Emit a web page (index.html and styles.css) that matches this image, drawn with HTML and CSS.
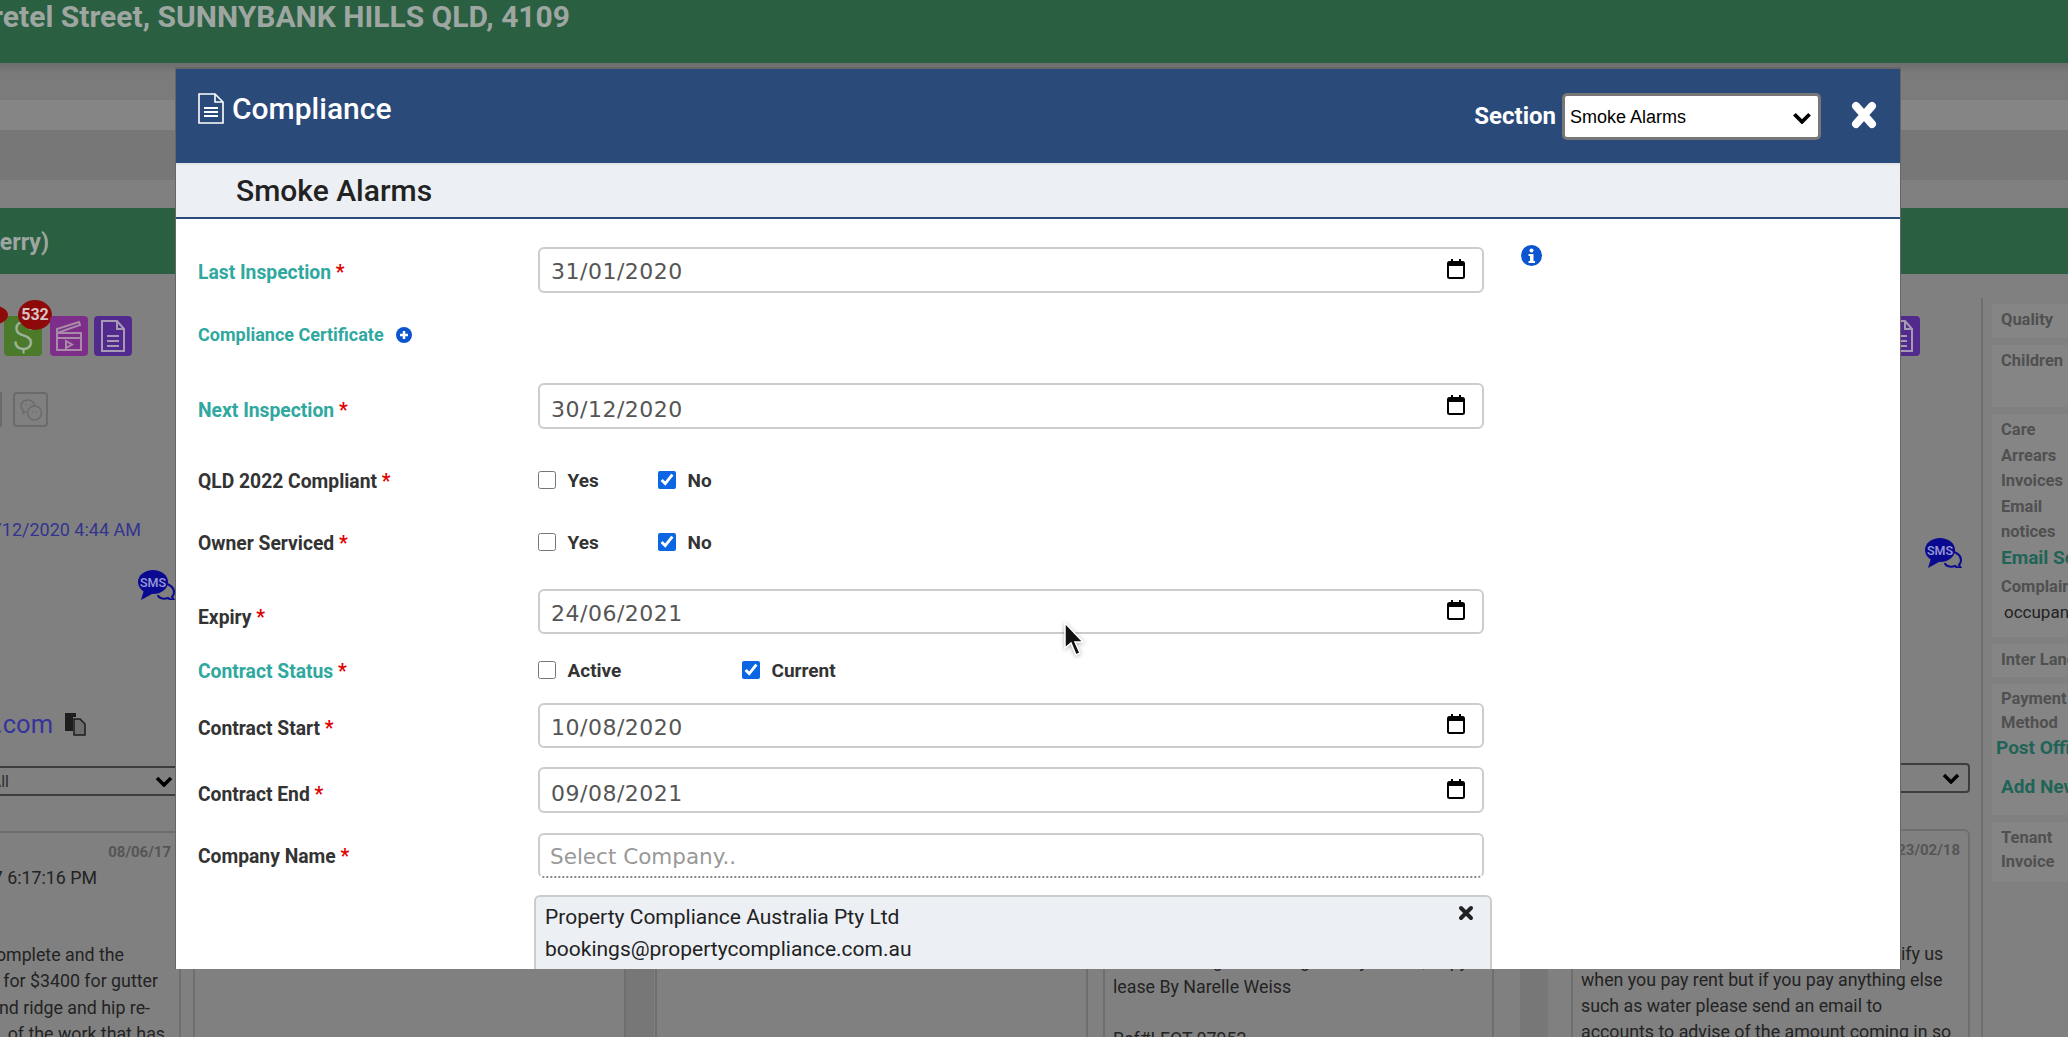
FILE: index.html
```html
<!DOCTYPE html>
<html lang="en">
<head>
    <meta charset="UTF-8">
    <title>Compliance</title>
    <link rel="stylesheet" href="styles.css">
</head>
<body>
<!--page behind the modal, already dimmed-->
<div class="page">
    <div class="topbar">
        <div class="clip-right address"><span>12 Bretel Street, SUNNYBANK HILLS QLD, 4109</span></div>
    </div>
    <div class="stripes">
        <div class="stripe-a"></div>
        <div class="stripe-b"></div>
        <div class="stripe-c"></div>
        <div class="stripe-d"></div>
    </div>
    <div class="tenantbar">
        <div class="clip-right tenant"><span>Tenant (Kerry)</span></div>
    </div>
    <div class="content">
        <div class="panel panel-1">
            <div class="tools">
                <div class="tiles">
                    <div class="tile tile-green">$<span class="badge">532</span><span class="badge badge-cut"></span></div>
                    <div class="tile tile-pink">
                        <svg width="28" height="32" viewBox="0 0 28 32" fill="none" stroke="#a98aa8" stroke-width="2"><path d="M2 13h24v17H2z"/><path d="M2 13l23-8-1-3L2 9z"/><path d="M2 18h24"/><path d="M11 21l6 3.500-6 3.500z"/></svg>
                    </div>
                    <div class="tile tile-violet">
                        <svg width="26" height="32" viewBox="0 0 26 32" fill="none" stroke="#a79ab5" stroke-width="2"><path d="M2 1h15l7 8v22H2z"/><path d="M17 1v8h7"/><path d="M7 16h12M7 21h12M7 26h12"/></svg>
                    </div>
                </div>
                <div class="chats">
                    <div class="chat-cut"></div>
                    <div class="chat-box">
                        <svg width="24" height="24" viewBox="0 0 24 24" fill="none" stroke="#6b6b6b" stroke-width="1.600"><path d="M9 2c-4 0-7 2.500-7 6 0 2 1 3.500 2.500 4.500L4 15l3-1.500"/><path d="M16 8.500C15 4.500 12 2 9 2"/><circle cx="15.500" cy="15" r="7"/><path d="M6.500 6.500h1M11 6.500h1M13 14h1M17 14h1"/></svg>
                    </div>
                </div>
                <div class="clip-right date-link"><span>Due 31/12/2020 4:44 AM</span></div>
                <div class="sms sms-left">
                    <svg width="37" height="30" viewBox="0 0 37 30"><use href="#sms-icon"/></svg>
                </div>
                <div class="mail-row">
                    <div class="clip-right mail"><span>accounts@tenant.com</span></div>
                    <svg class="copy" width="22" height="24" viewBox="0 0 22 24"><path d="M1 1h11v4H9v14H1z" fill="#1d1d1d"/><path d="M10 7h6l5 5v11H10z" fill="#6e6e6e" stroke="#1d1d1d" stroke-width="1.500"/></svg>
                </div>
                <div class="fake-select fake-select-left">
                    <span class="clip-right all"><span>All</span></span>
                    <svg width="18" height="12" viewBox="0 0 18 12"><use href="#chevron"/></svg>
                </div>
            </div>
            <div class="cards">
                <div class="card card-a">
                    <div class="card-date">08/06/17</div>
                    <div class="clip-right stamp"><span>08/06/2017 6:17:16 PM</span></div>
                    <div class="clip-right card-line line-1"><span>The work is complete and the</span></div>
                    <div class="clip-right card-line line-2"><span>was quoted for $3400 for gutter</span></div>
                    <div class="clip-right card-line line-3"><span>the gutters and ridge and hip re-</span></div>
                    <div class="clip-right card-line line-4"><span>of the work that has</span></div>
                </div>
                <div class="card card-b"></div>
            </div>
        </div>
        <div class="strip"></div>
        <div class="panel panel-2">
            <div class="tools"></div>
            <div class="cards">
                <div class="card card-c"></div>
                <div class="card card-d">
                    <p class="card-text">New lease signed and agreed by tenant, copy of<br>lease By Narelle Weiss<br><br>Ref#LFOT 07952</p>
                </div>
            </div>
        </div>
        <div class="strip"></div>
        <div class="panel panel-3">
            <div class="tools">
                <div class="tile tile-violet">
                    <svg width="26" height="32" viewBox="0 0 26 32" fill="none" stroke="#a79ab5" stroke-width="2"><path d="M2 1h15l7 8v22H2z"/><path d="M17 1v8h7"/><path d="M7 16h12M7 21h12M7 26h12"/></svg>
                </div>
                <div class="sms sms-right">
                    <svg width="37" height="30" viewBox="0 0 37 30"><use href="#sms-icon"/></svg>
                </div>
                <div class="fake-select fake-select-right">
                    <svg width="18" height="12" viewBox="0 0 18 12"><use href="#chevron"/></svg>
                </div>
            </div>
            <div class="cards">
                <div class="card card-e">
                    <div class="card-date">23/02/18</div>
                    <p class="card-text">Please remember you do not need to notify us<br>when you pay rent but if you pay anything else<br>such as water please send an email to<br>accounts to advise of the amount coming in so</p>
                </div>
            </div>
        </div>
        <div class="sidebar">
            <div class="side-box box-quality">Quality</div>
            <div class="side-box box-children">Children</div>
            <div class="side-box box-care">
                Care<br>Arrears<br>Invoices<br>Email<br>notices
                <div class="side-link">Email Service</div>
                <div class="side-sub">Complaint</div>
                <div class="side-plain">occupant</div>
            </div>
            <div class="side-box box-inter">Inter Language</div>
            <div class="side-box box-pay">
                Payment<br>Method
                <div class="side-link side-post">Post Office</div>
                <div class="side-link side-add">Add New</div>
            </div>
            <div class="side-box box-tenant">Tenant<br>Invoice</div>
        </div>
    </div>
</div>

<!--modal-->
<div class="modal">
    <div class="modal-head">
        <div class="modal-title">
            <svg width="26" height="31" viewBox="0 0 26 31" fill="none" stroke="#fff" stroke-width="1.600"><path d="M1 1h16l8 8v21H1z"/><path d="M17 1v8h8"/><path d="M6 15h14M6 19h14M6 23h14" stroke-width="2"/></svg>
            <span>Compliance</span>
        </div>
        <div class="modal-tools">
            <label class="section-label">Section</label>
            <div class="section-select">
                <select>
                    <option>Smoke Alarms</option>
                </select>
                <svg width="20" height="13" viewBox="0 0 18 12"><use href="#chevron"/></svg>
            </div>
            <svg class="close" width="26" height="28" viewBox="0 0 26 28"><path d="M5 5l16 18M21 5L5 23" stroke="#fff" stroke-width="8" stroke-linecap="round"/></svg>
        </div>
    </div>
    <div class="sub-head">Smoke Alarms</div>

    <div class="form">
        <div class="row row-input first">
            <div class="label teal">Last Inspection <i>*</i></div>
            <div class="date-field"><span>31/01/2020</span><svg width="18" height="20"><use href="#calendar"/></svg></div>
            <svg class="info" width="21" height="21" viewBox="0 0 21 21"><circle cx="10.500" cy="10.500" r="10.500" fill="#0b55d0"/><circle cx="10.500" cy="5.500" r="2" fill="#fff"/><path d="M7.500 9h5v7h1.500v2H7.500v-2H9v-5H7.500z" fill="#fff"/></svg>
        </div>
        <div class="row row-input cert">
            <div class="label teal small">Compliance Certificate
                <svg class="plus" width="16" height="16" viewBox="0 0 16 16"><circle cx="8" cy="8" r="8" fill="#0b55d0"/><path d="M8 4v8M4 8h8" stroke="#fff" stroke-width="2.500"/></svg>
            </div>
        </div>
        <div class="row row-input next">
            <div class="label label-drop teal">Next Inspection <i>*</i></div>
            <div class="date-field"><span>30/12/2020</span><svg width="18" height="20"><use href="#calendar"/></svg></div>
        </div>
        <div class="row row-check qld">
            <div class="label">QLD 2022 Compliant <i>*</i></div>
            <div class="checks">
                <label class="check"><input type="checkbox">Yes</label>
                <label class="check"><input type="checkbox" checked>No</label>
            </div>
        </div>
        <div class="row row-check owner">
            <div class="label">Owner Serviced <i>*</i></div>
            <div class="checks">
                <label class="check"><input type="checkbox">Yes</label>
                <label class="check"><input type="checkbox" checked>No</label>
            </div>
        </div>
        <div class="row row-input expiry">
            <div class="label label-low">Expiry <i>*</i></div>
            <div class="date-field"><span>24/06/2021</span><svg width="18" height="20"><use href="#calendar"/></svg></div>
        </div>
        <div class="row row-check status">
            <div class="label teal">Contract Status <i>*</i></div>
            <div class="checks">
                <label class="check check-wide"><input type="checkbox">Active</label>
                <label class="check"><input type="checkbox" checked>Current</label>
            </div>
        </div>
        <div class="row row-input start">
            <div class="label label-mid">Contract Start <i>*</i></div>
            <div class="date-field"><span>10/08/2020</span><svg width="18" height="20"><use href="#calendar"/></svg></div>
        </div>
        <div class="row row-input end">
            <div class="label label-drop">Contract End <i>*</i></div>
            <div class="date-field"><span>09/08/2021</span><svg width="18" height="20"><use href="#calendar"/></svg></div>
        </div>
        <div class="row row-input company">
            <div class="label label-up">Company Name <i>*</i></div>
            <div class="company-field">Select Company..</div>
        </div>
        <div class="picked">
            <svg class="picked-x" width="16" height="16" viewBox="0 0 16 16"><path d="M3 3l10 10M13 3L3 13" stroke="#222" stroke-width="4" stroke-linecap="round"/></svg>
            <div>Property Compliance Australia Pty Ltd</div>
            <div>bookings@propertycompliance.com.au</div>
        </div>
    </div>
</div>

<!--mouse pointer-->
<svg class="pointer" width="24" height="38" viewBox="0 0 24 38"><path d="M3 1v25l6-5 5 12 4-2-5-11h8z" fill="#111" stroke="#fff" stroke-width="1.500"/></svg>

<!--shared icons-->
<svg class="defs" width="0" height="0">
    <defs>
        <g id="calendar">
            <path d="M4 0h2v3H4zM12 0h2v3h-2z" fill="#000"/>
            <rect x="1" y="3" width="16" height="16" rx="1.500" fill="none" stroke="#000" stroke-width="2"/>
            <rect x="1" y="3" width="16" height="4" fill="#000"/>
        </g>
        <path id="chevron" d="M2 3l7 7 7-7" fill="none" stroke="#000" stroke-width="3.500"/>
        <g id="sms-icon">
            <path d="M24 14c8-1 12 4 12 8 0 3-2 5-2 5l2 3c-3 0-5-1-6-2-6 2-10-1-10-3" fill="none" stroke="#0a0a90" stroke-width="2"/>
            <ellipse cx="15" cy="12" rx="15" ry="12" fill="#0a0a90"/>
            <path d="M6 20l-3 10 11-6z" fill="#0a0a90"/>
            <text x="15" y="16.500" text-anchor="middle" class="sms-text">SMS</text>
        </g>
    </defs>
</svg>
</body>
</html>
```
FILE: styles.css
```css
*{
    margin: 0;
    padding: 0;
    box-sizing: border-box;
}
html,body{
    width: 2068px;
    height: 1037px;
    overflow: hidden;
}
body{
    position: relative;
    background: #808080;
    font-family: Roboto, "Liberation Sans", sans-serif;
}
.defs{
    position: absolute;
}

/* clipped on the left by the window edge */
.clip-right{
    display: flex;
    justify-content: flex-end;
    overflow: hidden;
    white-space: nowrap;
}

/*page behind*/
.page{
    height: 1037px;
    display: flex;
    flex-direction: column;
}
.topbar{
    height: 63px;
    flex: none;
    background: #2b5f41;
}
.address{
    width: 570px;
    font-size: 30px;
    line-height: 34px;
    font-weight: 700;
    color: #9ea6a1;
}
.stripes{
    height: 145px;
    flex: none;
}
.stripe-a{
    height: 37px;
    background: linear-gradient(#6d6d6d, #7b7b7b 10px);
}
.stripe-b{
    height: 30px;
    background: #858585;
}
.stripe-c{
    height: 50px;
    background: #777;
}
.stripe-d{
    height: 28px;
    background: #808080;
}
.tenantbar{
    height: 66px;
    flex: none;
    background: #2b5f41;
}
.tenant{
    width: 49px;
    font-size: 23px;
    line-height: 69px;
    font-weight: 700;
    color: #9ea6a1;
}
.content{
    flex: 1;
    display: flex;
    min-height: 0;
}
.panel{
    display: flex;
    flex-direction: column;
    flex: none;
}
.panel-1{
    width: 626px;
}
.panel-2{
    width: 866px;
}
.panel-3{
    width: 433px;
}
.strip{
    width: 28px;
    flex: none;
    background: #777;
}
.tools{
    height: 557px;
    flex: none;
}
.panel-3 .tools{
    height: 555px;
    display: flex;
    flex-direction: column;
    align-items: flex-end;
    padding: 42px 11px 0 0;
}

/*icon tiles*/
.tiles{
    width: 132px;
    height: 40px;
    margin-top: 42px;
    display: flex;
    justify-content: flex-end;
    gap: 6px;
}
.tile{
    width: 38px;
    height: 40px;
    border-radius: 4px;
    display: flex;
    align-items: center;
    justify-content: center;
    position: relative;
}
.tile-green{
    background: #4a7a2a;
    color: #9fb39a;
    font-size: 40px;
    font-weight: 300;
    margin-right: 2px;
}
.tile-pink{
    background: #7c2e88;
}
.tile-violet{
    background: #52298c;
}
.panel-3 .tile-violet{
    margin-right: 50px;
}
.badge{
    position: absolute;
    left: 14px;
    top: -16px;
    width: 34px;
    height: 30px;
    border-radius: 50%;
    background: #8e0a0a;
    color: #d8c4c4;
    font-size: 16px;
    line-height: 30px;
    font-weight: 700;
    text-align: center;
}
.badge-cut{
    left: -30px;
    top: -11px;
    width: 34px;
    height: 20px;
}
.chats{
    margin-top: 36px;
    height: 35px;
    display: flex;
    gap: 11px;
}
.chat-cut{
    width: 2px;
    border: 2px solid #6b6b6b;
    border-left: none;
    border-radius: 0 4px 4px 0;
}
.chat-box{
    width: 35px;
    height: 35px;
    border: 2px solid #6b6b6b;
    border-radius: 4px;
    display: flex;
    align-items: center;
    justify-content: center;
}
.date-link{
    width: 141px;
    margin-top: 91px;
    font-size: 18px;
    line-height: 24px;
    color: #34348e;
}
.sms{
    width: 37px;
    height: 30px;
}
.sms-left{
    margin: 28px 0 0 138px;
}
.sms-right{
    margin: 182px 8px 0 0;
}
.sms-text{
    font: 500 12.500px "Roboto", sans-serif;
    fill: #9a9ad8;
}
.mail-row{
    margin-top: 112px;
    height: 24px;
    display: flex;
    gap: 11px;
    align-items: center;
}
.mail{
    width: 53px;
    font-size: 25.500px;
    color: #34349a;
}
.fake-select{
    height: 30px;
    border-top: 2px solid #3d3d3d;
    border-bottom: 2px solid #3d3d3d;
    display: flex;
    align-items: center;
    justify-content: space-between;
}
.fake-select-left{
    width: 175px;
    margin-top: 30px;
    padding-right: 2px;
}
.fake-select-right{
    width: 300px;
    margin-top: 195px;
    border: 2px solid #3d3d3d;
    border-radius: 4px;
    padding-right: 8px;
    justify-content: flex-end;
}
.all{
    width: 9px;
    font-size: 16px;
    color: #2d2d2d;
}

/*cards under the modal*/
.cards{
    flex: 1;
    display: flex;
    min-height: 0;
}
.card{
    border: 2px solid #6e6e6e;
    border-radius: 6px;
    height: 400px;
    flex: none;
}
.card-text{
    font-size: 17.800px;
    line-height: 26px;
    color: #232323;
    white-space: nowrap;
}
.card-date{
    font-size: 15px;
    font-weight: 700;
    color: #555;
    text-align: right;
}
.card-a{
    width: 181px;
    border-left: none;
    border-radius: 0 6px 0 0;
    padding: 10px 8px 0 0;
}
.stamp{
    width: 97px;
    margin-top: 4px;
    font-size: 17.800px;
    line-height: 26px;
    color: #232323;
}
.card-line{
    font-size: 17.800px;
    line-height: 26.300px;
    color: #232323;
}
.line-1{
    width: 124px;
    margin-top: 51px;
}
.line-2{
    width: 158px;
}
.line-3{
    width: 150px;
}
.line-4{
    width: 165px;
}
.card-b{
    width: 433px;
    margin-left: 12px;
}
.card-c{
    width: 433px;
    margin-left: 1px;
}
.card-d{
    width: 391px;
    margin-left: 15px;
    padding: 115px 8px 0;
}
.card-e{
    width: 399px;
    margin-left: 23px;
    padding: 10px 8px 0;
}
.card-e .card-text{
    margin-top: 82px;
}

/*right sidebar*/
.sidebar{
    flex: 1;
    margin: 24px 0 0 0;
    padding-left: 9px;
    border-left: 2px solid #6e6e6e;
    min-width: 0;
    overflow: hidden;
    font-size: 16.500px;
    font-weight: 700;
    line-height: 25.500px;
    color: #505050;
    white-space: nowrap;
}
.side-box{
    width: 120px;
    background: #858585;
    padding: 3px 0 0 9px;
    margin-top: 7px;
}
.box-quality{
    height: 34px;
    margin-top: 6px;
}
.box-children{
    height: 62px;
}
.box-care{
    height: 223px;
}
.box-inter{
    height: 33px;
}
.box-pay{
    height: 131px;
    line-height: 24px;
}
.box-tenant{
    height: 60px;
    line-height: 24px;
    padding-top: 4px;
}
.side-link{
    color: #1f6457;
    font-size: 19px;
}
.side-post{
    margin: 1px 0 0 -5px;
}
.side-add{
    margin-top: 15px;
}
.side-sub{
    margin-top: 4px;
}
.side-plain{
    font-weight: 400;
    font-size: 17px;
    color: #222;
    padding-left: 3px;
}

/*modal*/
.modal{
    position: absolute;
    left: 175px;
    top: 67px;
    width: 1726px;
    height: 902px;
    background: #fff;
    border: 2px solid #666;
    border-width: 2px 1px 0 1px;
    overflow: hidden;
}
.modal-head{
    height: 94px;
    background: #2a4a7a;
    display: flex;
    justify-content: space-between;
    padding: 24px 23px 0 22px;
}
.modal-title{
    display: flex;
    gap: 8px;
    height: 32px;
    color: #fff;
    font-size: 30px;
    line-height: 32px;
    font-weight: 500;
}
.modal-tools{
    display: flex;
    align-items: flex-start;
}
.section-label{
    color: #fff;
    font-size: 24px;
    font-weight: 700;
    line-height: 47px;
    margin-right: 6px;
}
.section-select{
    position: relative;
    width: 259px;
    height: 47px;
    margin-right: 30px;
}
.section-select select{
    width: 100%;
    height: 100%;
    appearance: none;
    background: #fff;
    border: 3px solid #777;
    border-radius: 5px;
    padding-left: 5px;
    font: 18px "Liberation Sans", Arial, sans-serif;
    color: #000;
}
.section-select svg{
    position: absolute;
    right: 9px;
    top: 18px;
}
.close{
    margin-top: 8px;
}
.sub-head{
    height: 56px;
    background: #eceff4;
    border-top: 2px solid #e4e5e8;
    border-bottom: 2px solid #2a4a7a;
    padding-left: 60px;
    font-size: 30px;
    line-height: 52px;
    font-weight: 500;
    color: #222;
}

/*form rows*/
.form{
    padding: 0 0 0 22px;
}
.row{
    display: grid;
    grid-template-columns: 340px 946px auto;
    align-items: center;
    width: 1360px;
}
.row-input{
    height: 45px;
}
.row-check{
    height: 30px;
}
.first{
    height: 46px;
    margin-top: 28px;
}
.cert{
    margin-top: 18px;
}
.next{
    height: 46px;
    margin-top: 27px;
}
.qld{
    margin-top: 36px;
}
.owner{
    margin-top: 32px;
}
.expiry{
    margin-top: 32px;
}
.status{
    margin-top: 21px;
}
.start{
    margin-top: 18px;
}
.end{
    height: 46px;
    margin-top: 19px;
}
.company{
    margin-top: 20px;
}
.label{
    font-size: 19.300px;
    font-weight: 700;
    color: #333;
    padding-top: 4px;
}
.label i{
    color: #e00000;
    font-style: normal;
}
.teal{
    color: #2fa8a0;
}
.small{
    font-size: 18px;
    padding-top: 2px;
    display: flex;
    align-items: center;
    gap: 12px;
}
.label-low{
    padding-top: 11px;
}
.label-mid{
    padding-top: 6px;
}
.label-drop{
    padding-top: 9px;
}
.label-up{
    padding-top: 2px;
}
.row-check .label{
    padding: 3px 0 0;
}
.date-field{
    height: 100%;
    border: 2px solid #ccc;
    border-radius: 6px;
    display: flex;
    justify-content: space-between;
    align-items: center;
    padding: 0 17px 0 11px;
    font-family: "DejaVu Sans", sans-serif;
    font-size: 22px;
    letter-spacing: .5px;
    color: #555;
}
.date-field span{
    padding-top: 3px;
}
.next .date-field span,
.end .date-field span{
    padding-top: 6px;
}
.date-field svg{
    margin-top: -3px;
}
.info{
    margin: -30px 0 0 37px;
}
.checks{
    display: flex;
}
.check{
    width: 120px;
    display: flex;
    align-items: center;
    gap: 11.500px;
    font-size: 19px;
    font-weight: 700;
    color: #333;
}
.check-wide{
    width: 204px;
}
.check input{
    width: 18px;
    height: 18px;
    accent-color: #0b66e4;
}
.company-field{
    height: 45px;
    border: 2px solid #ccc;
    border-bottom: 2px dotted #888;
    border-radius: 6px;
    padding-left: 10px;
    font-family: "DejaVu Sans", sans-serif;
    font-size: 21.500px;
    line-height: 44px;
    color: #999;
}
.picked{
    position: relative;
    width: 958px;
    height: 110px;
    margin: 17px 0 0 336px;
    background: #eceff4;
    border: 2px solid #ccc;
    border-radius: 6px;
    padding: 4px 9px;
    font-size: 21px;
    line-height: 32px;
    color: #222;
}
.picked-x{
    position: absolute;
    right: 16px;
    top: 8px;
}

/*mouse pointer*/
.pointer{
    position: absolute;
    left: 1062px;
    top: 622px;
    filter: drop-shadow(0 1px 2px rgba(0,0,0,.3));
}
```
